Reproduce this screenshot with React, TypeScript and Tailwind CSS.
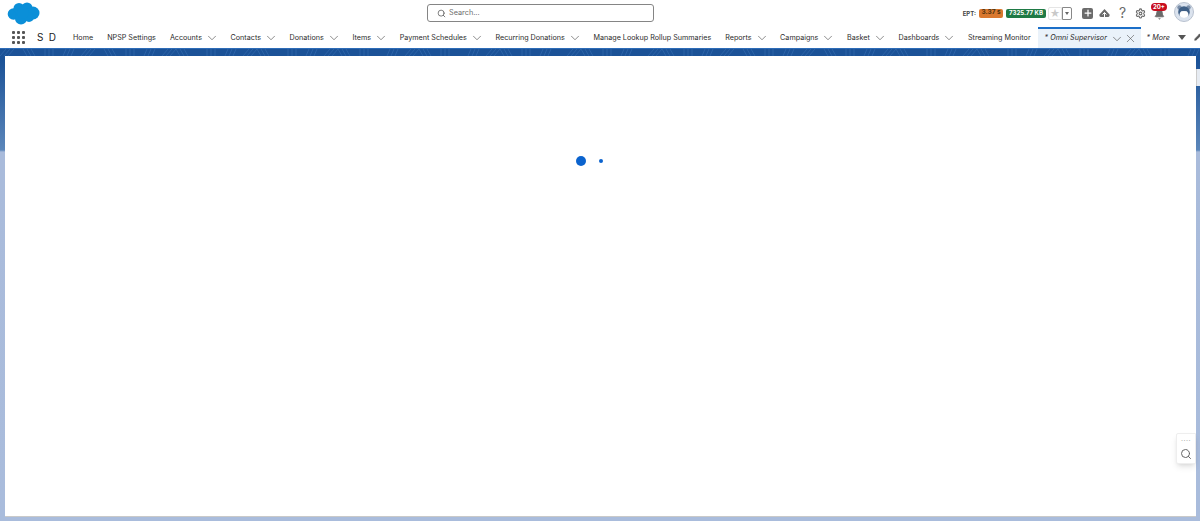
import React from "react";
import { ChevronDown, Search, X, Pencil, Settings, Bell, Plus } from "lucide-react";

const tabs: [string, boolean][] = [
  ["Home", false],
  ["NPSP Settings", false],
  ["Accounts", true],
  ["Contacts", true],
  ["Donations", true],
  ["Items", true],
  ["Payment Schedules", true],
  ["Recurring Donations", true],
  ["Manage Lookup Rollup Summaries", false],
  ["Reports", true],
  ["Campaigns", true],
  ["Basket", true],
  ["Dashboards", true],
];

function Cloud() {
  return (
    <svg width="33" height="23" viewBox="0 0 33 23">
      <g fill="#0b8fd8">
        <circle cx="6.5" cy="12" r="5.8" />
        <circle cx="12" cy="6.5" r="5.5" />
        <circle cx="20" cy="6" r="5.5" />
        <circle cx="26" cy="11" r="6.5" />
        <circle cx="14" cy="16.5" r="6" />
        <circle cx="22" cy="15" r="5" />
        <circle cx="16" cy="11" r="6" />
      </g>
    </svg>
  );
}

function Waffle() {
  return (
    <div className="grid grid-cols-3 gap-[2px] w-[13px]">
      {Array.from({ length: 9 }).map((_, i) => (
        <div key={i} className="w-[3px] h-[3px] rounded-[1px] bg-[#555555]" />
      ))}
    </div>
  );
}

const streaks = Array.from({ length: 60 }).map((_, i) => {
  const x = i * 20 + ((i * 7) % 9);
  const slant = i % 4 === 0 ? 6 : i % 4 === 1 ? -4 : i % 4 === 2 ? 0 : 3;
  return { x, slant };
});

function BandPattern() {
  return (
    <svg width="1200" height="7" viewBox="0 0 1200 7" className="block">
      {streaks.map((s, i) => (
        <g key={i} stroke="#3f76b8" strokeWidth="0.7" opacity="0.7">
          <line x1={s.x} y1="7" x2={s.x + s.slant} y2="0" />
          <line x1={s.x + 4} y1="7" x2={s.x + 4 + s.slant} y2="0" />
          <line x1={s.x + 8} y1="7" x2={s.x + 8 + s.slant} y2="0" />
        </g>
      ))}
    </svg>
  );
}

export default function App() {
  return (
    <div
      className="w-[1200px] h-[521px] overflow-hidden flex flex-col bg-[linear-gradient(#1b5297_0,#1b5297_60px,#5b86ba_150px,#a9bbdb_152px,#a9bcdc_100%)] text-[#181818]"
      style={{ fontFamily: "Inter, 'Liberation Sans', sans-serif" }}
    >
      <div className="bg-white h-[48px] shrink-0 flex flex-col">
        <div className="h-[26px] flex items-start relative">
          <div className="ml-[7px] mt-[2px]"><Cloud /></div>
          <div className="absolute left-[427px] top-[4px] w-[227px] h-[18px] border border-[#858585] rounded-[3px] flex items-center pl-[9px] gap-[3px] text-[7.3px] text-[#6b6b6b]">
            <Search size={9} strokeWidth={2} color="#555" />
            <span className="pt-[1px]">Search...</span>
          </div>
          <div className="ml-auto flex items-center h-[26px] pr-[6px]">
            <span className="text-[6px] font-bold text-[#444] mr-[3px]">EPT:</span>
            <span className="bg-[#d9782f] text-[#4a3210] text-[6.5px] font-bold rounded-[2px] h-[9px] w-[24px] flex items-center justify-center mr-[3px]">3.37 s</span>
            <span className="bg-[#1f7a45] text-white text-[6.1px] font-bold rounded-[2px] h-[9px] w-[40px] flex items-center justify-center mr-[2px] whitespace-nowrap">7325.77 KB</span>
            <span className="w-[14px] h-[13px] border border-[#e5e5e5] rounded-l-[2px] flex items-center justify-center text-[#c9c9c9] text-[10px] leading-none">★</span>
            <span className="w-[10px] h-[13px] border border-[#888] rounded-r-[2px] flex items-center justify-center mr-[10px]">
              <span className="w-0 h-0 border-l-[2.5px] border-r-[2.5px] border-t-[3px] border-l-transparent border-r-transparent border-t-[#666]" />
            </span>
            <span className="w-[11px] h-[11px] bg-[#6b6b6b] rounded-[2px] flex items-center justify-center mr-[6px]">
              <Plus size={10} strokeWidth={3} color="white" />
            </span>
            <svg width="11" height="11" viewBox="0 0 11 11" className="mr-[8px]">
              <path d="M1.8 9 A1.8 1.8 0 0 1 1.4 5.6 L5.5 1 L9.6 5.6 A1.8 1.8 0 0 1 9.2 9 Z" fill="#6b6b6b" />
              <path d="M5.5 11 V4.5 M3.5 6.5 L5.5 4.5 L7.5 6.5" fill="none" stroke="#fff" strokeWidth="1" />
            </svg>
            <span className="text-[14px] text-[#6b6b6b] w-[9px] text-center leading-none mr-[8px]">?</span>
            <Settings size={11} strokeWidth={2.4} color="#6b6b6b" className="mr-[7px]" />
            <div className="relative w-[13px] h-[13px] mr-[8px] mt-[1px] flex items-end justify-center">
              <Bell size={11} fill="#6b6b6b" color="#6b6b6b" />
              <span className="absolute -top-[4px] -left-[2px] w-[16px] h-[8px] rounded-full bg-[#c80e1e] text-white text-[6px] font-bold flex items-center justify-center leading-none">20+</span>
            </div>
            <svg width="20" height="20" viewBox="0 0 20 20" className="mb-[2px]">
              <circle cx="10" cy="10" r="9.5" fill="#dbe3ee" stroke="#b9c2cf" />
              <circle cx="5.5" cy="5.5" r="2.2" fill="#7a8ea8" />
              <circle cx="14.5" cy="5.5" r="2.2" fill="#7a8ea8" />
              <circle cx="10" cy="10" r="5.8" fill="#3e5f86" />
              <ellipse cx="10" cy="12.5" rx="4.4" ry="3.4" fill="#ffffff" />
              <circle cx="8" cy="10" r="0.8" fill="#ffffff" />
              <circle cx="12" cy="10" r="0.8" fill="#ffffff" />
            </svg>
          </div>
        </div>
        <div className="h-[22px] flex items-center">
          <div className="ml-[12px] w-[13px] mr-[12px]"><Waffle /></div>
          <span className="text-[10px] tracking-[1.2px] w-[36px] text-[#222] shrink-0">S D</span>
          <div className="flex items-center h-full text-[7.2px] text-[#2b2b2b] whitespace-nowrap">
            {tabs.map(([t, c]) => (
              <div key={t} className="flex items-center h-full mr-[14px] pt-[2px]">
                <span>{t}</span>
                {c && <ChevronDown size={14} strokeWidth={1.15} color="#555" className="ml-[3px] -mr-[2.4px]" />}
              </div>
            ))}
            <span className="mr-[7px] pt-[2px]">Streaming Monitor</span>
            <div className="w-[103px] h-[21px] mt-auto border-t-2 border-[#1b6fc8] bg-[#eaf2fa] flex items-center pl-[7px] italic shrink-0">
              <span>* Omni Supervisor</span>
              <ChevronDown size={14} strokeWidth={1.15} color="#555" className="ml-[3px]" />
              <X size={13} strokeWidth={1.1} color="#555" className="ml-[0px]" />
            </div>
            <span className="ml-[6px] italic pt-[2px]">* More</span>
            <span className="ml-[8px] w-0 h-0 border-l-[4px] border-r-[4px] border-t-[5px] border-l-transparent border-r-transparent border-t-[#555]" />
            <Pencil size={8} fill="#555" color="#555" className="ml-[8px]" />
          </div>
        </div>
      </div>
      <div className="h-[8px] shrink-0 border-t border-[#2d6cb8] overflow-hidden">
        <BandPattern />
      </div>
      <div className="relative flex-1 ml-[5px] mr-[4px] mb-[4px] bg-white border-b border-[#c9c9c9]">
        <div className="absolute left-[571px] top-[100px] w-[10px] h-[10px] rounded-full bg-[#0b63ce]" />
        <div className="absolute left-[594px] top-[103px] w-[4px] h-[4px] rounded-full bg-[#0b63ce]" />
        <div className="absolute -right-[4px] top-[13px] w-[4px] h-[17px] bg-[#e6ebf2] border-l border-[#cccccc]" />
        <div className="absolute right-0 top-[377px] w-[20px] h-[31px] bg-white shadow-md rounded-l-[2px] border border-[#eeeeee] flex flex-col items-center pt-[3px]">
          <span className="text-[7px] text-[#aaaaaa] leading-none tracking-[0.5px]">····</span>
          <Search size={12} color="#666" className="mt-[4px]" />
        </div>
      </div>
    </div>
  );
}
